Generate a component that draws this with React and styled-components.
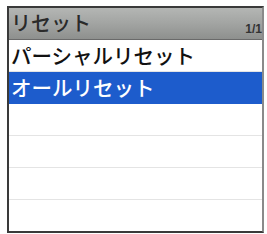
import React from 'react'
import styled, { createGlobalStyle } from 'styled-components'

const Global = createGlobalStyle`
  body {
    margin: 0;
    background: #fff;
    font-family: "Noto Sans CJK JP", "Noto Sans", sans-serif;
  }
`

const Page = styled.div`
  padding: 6px 0 0 7px;
`

const Screen = styled.div`
  width: 253px;
  height: 223px;
  border: 2px solid #3a3a3a;
  border-right-color: #8a8a8a;
  display: flex;
  flex-direction: column;
  background: #fff;
  overflow: hidden;
`

const Header = styled.div`
  height: 31px;
  flex: none;
  display: flex;
  align-items: center;
  justify-content: space-between;
  padding: 0 0 0 2px;
  background: linear-gradient(#b4b6b4 0%, #a2a4a2 50%, #8e908e 100%);
  border-bottom: 1px solid #6a6a6a;
`

const Title = styled.span`
  font-size: 20px;
  font-weight: 500;
  color: #2a2a2a;
  line-height: 1;
  margin-top: -2px;
`

const Counter = styled.span`
  font-family: "Liberation Sans", sans-serif;
  font-size: 12px;
  font-weight: 700;
  color: #333;
  align-self: flex-end;
  margin-bottom: 3px;
`

const Row = styled.div`
  flex: 1;
  display: flex;
  align-items: center;
  padding-left: 2px;
  font-size: 20.5px;
  font-weight: 500;
  line-height: 1;
  color: ${p => (p.$active ? '#fff' : '#111')};
  background: ${p => (p.$active ? '#1d5ccc' : '#fff')};
  border-bottom: 1px solid ${p => (p.$active ? '#1d5ccc' : '#e4e4e4')};
  &:last-child {
    border-bottom: none;
  }
`

const items = ['パーシャルリセット', 'オールリセット', '', '', '', '']

export default function App() {
  return (
    <Page>
      <Global />
      <Screen>
        <Header>
          <Title>リセット</Title>
          <Counter>1/1</Counter>
        </Header>
        {items.map((t, i) => (
          <Row key={i} $active={i === 1}>{t}</Row>
        ))}
      </Screen>
    </Page>
  )
}
